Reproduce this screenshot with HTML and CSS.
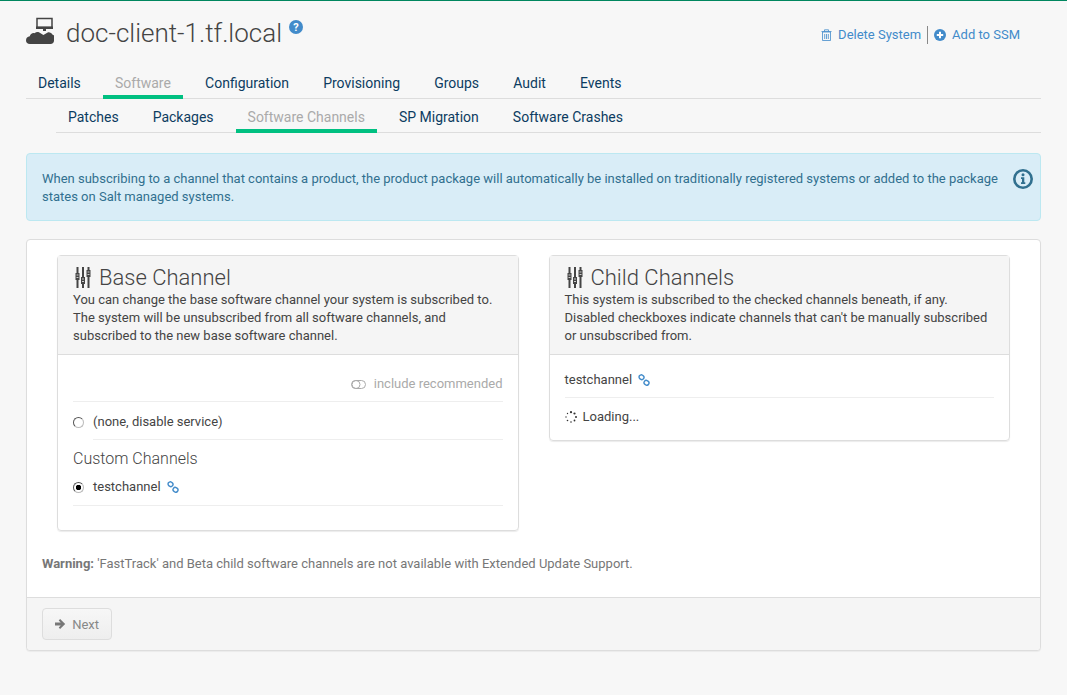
FILE: index.html

```html
<!DOCTYPE html>
<html lang="en">
<head>
  <meta charset="UTF-8" />
  <title>doc-client-1.tf.local - Software Channels</title>
  <link rel="stylesheet" href="styles.css">
</head>
<body>
  <div class="toolbar">
    <svg class="sys-icon" width="28" height="28" viewBox="0 0 28 28">
      <path d="M11 1.500h15v9H11z" fill="none" stroke="#444" stroke-width="1.500"/>
      <path d="M10 9.500h17v2.500H10zM17 12h3v2h-3z" fill="#444"/>
      <path d="M0 23.500c0-2.400 1.500-3.900 3.800-4.200.4-2.200 2.500-3.600 4.800-3.100 1.200-1 2.800-1.400 4.300-.9l4.500 2.800 4.300-2.700c1.900-.4 4.100.5 4.900 2.400 1.300.2 1.400.5 1.400 1v5c0 1.900-1.400 3.200-3.400 3.200H3.800C1.600 27 0 25.600 0 23.500z" fill="#444"/>
    </svg>
    <h1 class="title">doc-client-1.tf.local</h1>
    <svg class="help" width="14" height="14" viewBox="0 0 14 14">
      <circle cx="7" cy="7" r="7" fill="#428bca"/>
      <text x="7" y="11" text-anchor="middle" class="help-q">?</text>
    </svg>
    <div class="actions">
      <a class="action action-sep">
        <svg width="11" height="12" viewBox="0 0 11 12"><path d="M1.500 3h8v8.500h-8zM.5 2.500h10M3.500 2.500V.8h4v1.700M3.700 5v5M5.500 5v5M7.300 5v5" fill="none" stroke="#428bca" stroke-width="1" opacity=".8"/></svg>
        Delete System
      </a>
      <a class="action">
        <svg width="12" height="12" viewBox="0 0 12 12"><circle cx="6" cy="6" r="6" fill="#428bca"/><path d="M2.800 6h6.400M6 2.800v6.400" stroke="#fff" stroke-width="2"/></svg>
        Add to SSM
      </a>
    </div>
  </div>

  <ul class="tabs">
    <li>Details</li>
    <li class="active">Software</li>
    <li>Configuration</li>
    <li>Provisioning</li>
    <li>Groups</li>
    <li>Audit</li>
    <li>Events</li>
  </ul>
  <ul class="tabs subtabs">
    <li>Patches</li>
    <li>Packages</li>
    <li class="active">Software Channels</li>
    <li>SP Migration</li>
    <li>Software Crashes</li>
  </ul>

  <div class="alert">
    <p>When subscribing to a channel that contains a product, the product package will automatically be installed on traditionally registered systems or added to the package states on Salt managed systems.</p>
    <svg class="alert-icon" width="20" height="20" viewBox="0 0 20 20">
      <circle cx="10" cy="10" r="8.700" fill="none" stroke="#31708f" stroke-width="2.600"/>
      <circle cx="10" cy="5.800" r="1.500" fill="#31708f"/>
      <path d="M8 8.300h3.300v5H12.300v1.700H8v-1.700h1v-3.300H8z" fill="#31708f"/>
    </svg>
  </div>

  <div class="panel">
    <div class="panel-body">
      <div class="columns">
        <div class="card">
          <div class="card-head">
            <h2>
              <svg class="sliders" width="16" height="21" viewBox="0 0 16 21"><path d="M2.500 0v21M8 0v21M13.500 0v21" stroke="#444" stroke-width="2"/><path d="M.5 6h4v7h-4zM6 10h4v7H6zM11.500 3h4v7h-4z" fill="#444"/><path d="M1.500 8h2M1.500 10.500h2M7 12h2M7 14.500h2M12.500 5h2M12.500 7.500h2" stroke="#ccc" stroke-width="1"/></svg>
              Base Channel
            </h2>
            <p>You can change the base software channel your system is subscribed to. The system will be unsubscribed from all software channels, and subscribed to the new base software channel.</p>
          </div>
          <div class="card-body">
            <div class="recommended">
              <svg width="15" height="9" viewBox="0 0 15 9"><rect x=".5" y=".5" width="14" height="8" rx="4" fill="none" stroke="#aaa"/><circle cx="5" cy="4.500" r="4" fill="none" stroke="#aaa"/></svg>
              include recommended
            </div>
            <label class="row row-none"><span class="radio"></span>(none, disable service)</label>
            <h3>Custom Channels</h3>
            <label class="row row-custom"><span class="radio checked"></span>testchannel
              <svg class="link link-custom" width="12" height="12" viewBox="0 0 12 12"><g fill="none" stroke="#428bca" stroke-width="1.400"><rect x="1" y="1" width="5" height="4.400" rx="2.200" transform="rotate(35 3.500 3.200)"/><rect x="6" y="6.600" width="5" height="4.400" rx="2.200" transform="rotate(35 8.500 8.800)"/></g></svg>
            </label>
          </div>
        </div>

        <div class="card">
          <div class="card-head">
            <h2>
              <svg class="sliders" width="16" height="21" viewBox="0 0 16 21"><path d="M2.500 0v21M8 0v21M13.500 0v21" stroke="#444" stroke-width="2"/><path d="M.5 6h4v7h-4zM6 10h4v7H6zM11.500 3h4v7h-4z" fill="#444"/><path d="M1.500 8h2M1.500 10.500h2M7 12h2M7 14.500h2M12.500 5h2M12.500 7.500h2" stroke="#ccc" stroke-width="1"/></svg>
              Child Channels
            </h2>
            <p>This system is subscribed to the checked channels beneath, if any. Disabled checkboxes indicate channels that can't be manually subscribed or unsubscribed from.</p>
          </div>
          <div class="card-body child-body">
            <div class="child-name">testchannel
              <svg class="link" width="12" height="12" viewBox="0 0 12 12"><g fill="none" stroke="#428bca" stroke-width="1.400"><rect x="1" y="1" width="5" height="4.400" rx="2.200" transform="rotate(35 3.500 3.200)"/><rect x="6" y="6.600" width="5" height="4.400" rx="2.200" transform="rotate(35 8.500 8.800)"/></g></svg>
            </div>
            <div class="loading">
              <svg width="12" height="12" viewBox="0 0 12 12"><g fill="#333"><circle cx="6" cy="1.200" r="1.100"/><circle cx="9.500" cy="2.500" r="1.100"/><circle cx="11" cy="6" r="1"/><circle cx="9.500" cy="9.500" r=".9"/><circle cx="6" cy="11" r=".8"/><circle cx="2.500" cy="9.500" r=".8"/><circle cx="1" cy="6" r=".7"/><circle cx="2.500" cy="2.500" r=".7"/></g></svg>
              Loading...
            </div>
          </div>
        </div>
      </div>
      <p class="warning"><strong>Warning:</strong> 'FastTrack' and Beta child software channels are not available with Extended Update Support.</p>
    </div>
    <div class="panel-foot">
      <button class="btn">
        <svg width="12" height="12" viewBox="0 0 12 12"><path d="M0 4.300h6.200L4 2.100 5.500.6 11 6l-5.500 5.400L4 9.900l2.200-2.200H0z" fill="#777"/></svg>
        Next
      </button>
    </div>
  </div>
</body>
</html>
```

FILE: styles.css

```css
* { box-sizing: border-box; }
body { margin: 0; min-height: 695px; padding: 0 26px; background: #f7f7f7; border-top: 1px solid #00875f; color: #444; font-family: Roboto, sans-serif; font-size: 13px; line-height: 18px; }
p { margin: 0; }

.toolbar { display: flex; align-items: flex-start; height: 69px; }
.sys-icon { margin-top: 16px; }
.title { margin: 15px 0 0 12px; font-size: 26px; font-weight: 300; line-height: 34px; color: #444; }
.help { margin: 19px 0 0 7px; }
.help-q { fill: #fff; font-size: 11px; font-weight: 700; font-family: Roboto, sans-serif; }
.actions { display: flex; margin: 25px 21px 0 auto; color: #428bca; }
.action { display: flex; align-items: center; gap: 6px; height: 18px; }
.action-sep { padding-right: 6px; margin-right: 6px; border-right: 1px solid #888; }

.tabs { display: flex; list-style: none; margin: 0; padding: 0 0 0 12px; border-bottom: 1px solid #ddd; height: 29px; font-size: 14px; color: #0c3c61; }
.tabs li { margin-right: 34.15px; line-height: 26px; position: relative; }
.tabs li.active { color: #aaa; }
.tabs li.active::after { content: ""; position: absolute; left: -12px; right: -12px; bottom: -1px; height: 4px; background: #00c081; }
.subtabs { margin-left: 30px; padding-left: 12px; height: 34px; padding-top: 5px; }
.subtabs li { margin-right: 34px; }

.alert { display: flex; align-items: flex-start; margin-top: 20px; height: 68px; padding: 15px 7px 0 15px; background: #d9edf7; border: 1px solid #bce8f1; border-radius: 4px; color: #31708f; }
.alert p { flex: 1; margin-top: 1px; }
.alert-icon { margin: 0 0 0 15px; flex: none; }

.panel { margin-top: 18px; background: #fff; border: 1px solid #ddd; border-radius: 4px; box-shadow: 0 1px 1px rgba(0,0,0,.05); }
.panel-body { padding: 15px 15px 0; }
.columns { display: flex; gap: 30px; align-items: flex-start; padding: 0 15px; }
.card { width: 462px; border: 1px solid #ddd; border-radius: 4px; box-shadow: 0 1px 1px rgba(0,0,0,.08); }
.card-head { height: 99px; padding: 9px 15px 0; background: #f5f5f5; border-bottom: 1px solid #ddd; }
.card-head h2 { display: flex; align-items: center; gap: 8px; margin: 0; font-size: 22px; font-weight: 300; line-height: 26px; color: #444; }
.sliders { flex: none; margin: -2px 0 0 2px; }
.card-body { padding: 20px 15px 24px; }

.recommended { display: flex; align-items: center; justify-content: flex-end; gap: 8px; height: 18px; color: #aaa; }
.row { display: flex; align-items: center; }
.row-none { margin-top: 8px; height: 39px; padding-top: 2px; border-top: 1px solid #eee; position: relative; }
.row-none::after { content: ""; position: absolute; left: 20px; right: 0; bottom: 0; border-bottom: 1px solid #eee; }
.row-custom { height: 37px; border-bottom: 1px solid #eee; }
.card-body h3 { margin: 9px 0 0; font-size: 16px; font-weight: 300; line-height: 20px; color: #444; }
.radio { flex: none; width: 11px; height: 11px; margin: 0 9px 0 0; border: 1px solid; border-color: #555 #bbb #bbb #555; border-radius: 50%; background: #fff; }
.radio.checked { background: radial-gradient(circle, #000 0 2.500px, #fff 3px); }
.link { margin-left: 3px; }
.link-custom { margin-left: 6px; }

.child-body { padding: 14px 15px 0; }
.child-name { display: flex; align-items: center; height: 29px; padding-bottom: 6px; border-bottom: 1px solid #eee; gap: 3px; }
.loading { display: flex; align-items: center; gap: 6px; height: 42px; padding-bottom: 4px; }

.warning { margin-top: 24px; color: #777; }
.panel-foot { margin-top: 24px; height: 53px; padding: 10px 15px 0; background: #f5f5f5; border-top: 1px solid #ddd; border-radius: 0 0 4px 4px; }
.btn { display: flex; align-items: center; gap: 6px; width: 70px; height: 32px; padding: 0 12px; background: linear-gradient(#f7f7f7, #eee); border: 1px solid #ddd; border-radius: 4px; color: #888; font: 13px Roboto, sans-serif; }
```
